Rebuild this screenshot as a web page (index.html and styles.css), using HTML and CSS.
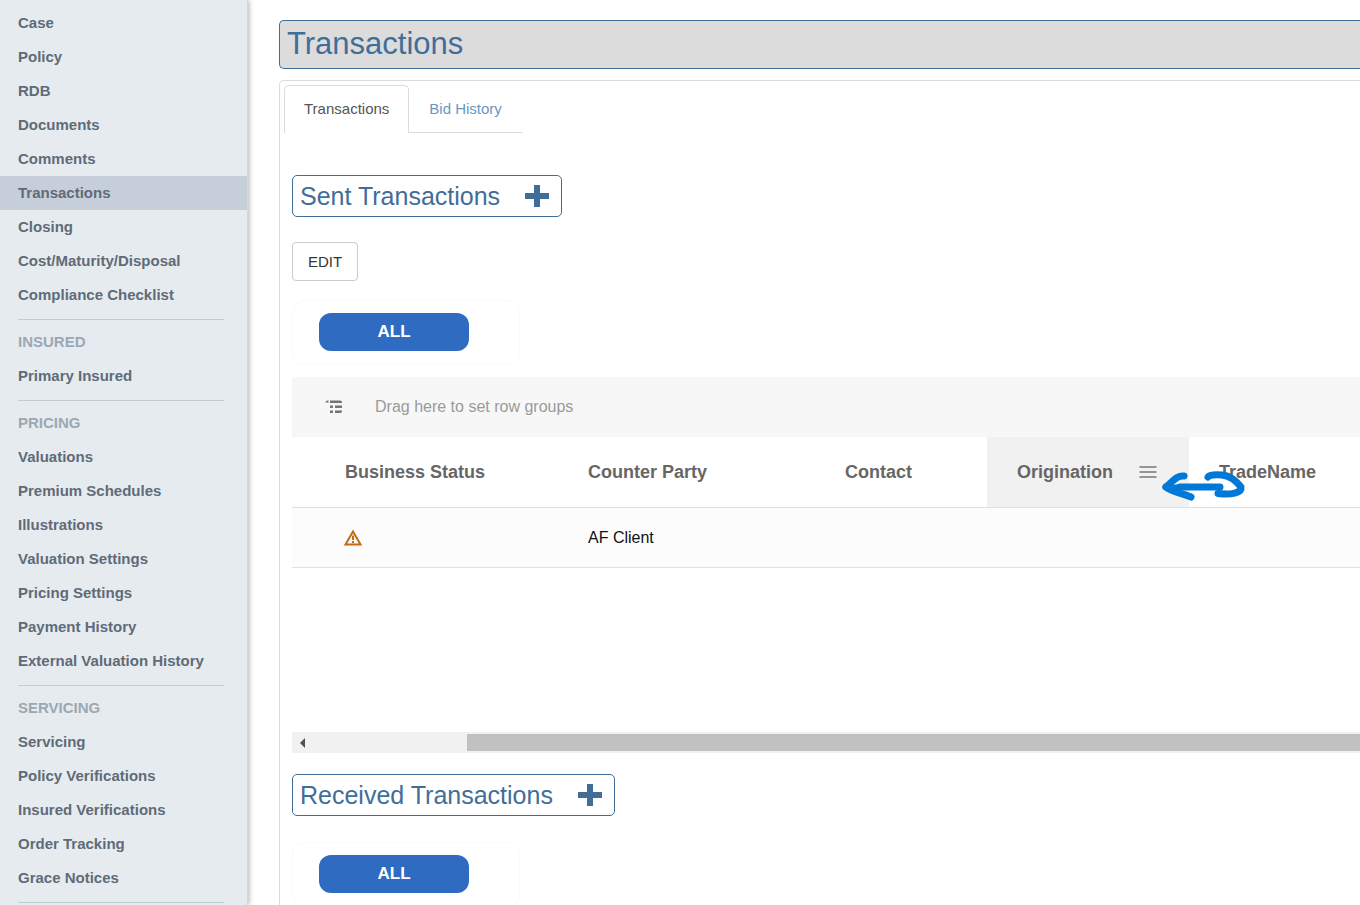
FILE: index.html
```html
<!DOCTYPE html>
<html lang="en">
<head>
    <meta charset="UTF-8">
    <meta name="viewport" content="width=device-width, initial-scale=1.0">
    <title>Transactions</title>
    <link rel="stylesheet" href="styles.css">
</head>
<body>
    <nav id="sidebar">
        <ul>
            <li><a href="#">Case</a></li>
            <li><a href="#">Policy</a></li>
            <li><a href="#">RDB</a></li>
            <li><a href="#">Documents</a></li>
            <li><a href="#">Comments</a></li>
            <li><a href="#" class="active">Transactions</a></li>
            <li><a href="#">Closing</a></li>
            <li><a href="#">Cost/Maturity/Disposal</a></li>
            <li><a href="#">Compliance Checklist</a></li>
        </ul>
        <hr>
        <h2>INSURED</h2>
        <ul>
            <li><a href="#">Primary Insured</a></li>
        </ul>
        <hr>
        <h2>PRICING</h2>
        <ul>
            <li><a href="#">Valuations</a></li>
            <li><a href="#">Premium Schedules</a></li>
            <li><a href="#">Illustrations</a></li>
            <li><a href="#">Valuation Settings</a></li>
            <li><a href="#">Pricing Settings</a></li>
            <li><a href="#">Payment History</a></li>
            <li><a href="#">External Valuation History</a></li>
        </ul>
        <hr>
        <h2>SERVICING</h2>
        <ul>
            <li><a href="#">Servicing</a></li>
            <li><a href="#">Policy Verifications</a></li>
            <li><a href="#">Insured Verifications</a></li>
            <li><a href="#">Order Tracking</a></li>
            <li><a href="#">Grace Notices</a></li>
        </ul>
        <hr>
    </nav>

    <main>
        <h1>Transactions</h1>
        <div id="panel">
            <div class="tabs">
                <a href="#" class="tab selected">Transactions</a>
                <a href="#" class="tab">Bid History</a>
            </div>

            <section class="sent">
                <div class="section-title">
                    <h2>Sent Transactions</h2>
                    <button class="add-button" aria-label="Add sent transaction">
                        <svg width="24" height="22" viewBox="0 0 24 22"><path d="M9 0h6v8h9v6h-9v8H9v-8H0V8h9z"/></svg>
                    </button>
                </div>
                <button class="edit-button">EDIT</button>
                <div class="filter">
                    <button class="filter-button">ALL</button>
                </div>

                <div class="grid">
                    <div class="row-groups">
                        <svg width="18" height="14" viewBox="0 0 18 14">
                            <path d="M0 2.500L2 .500h1.500v2z"/>
                            <path d="M5 .500h10.500l1.500 1v1.500H5z"/>
                            <path d="M5 5.500h3v2.500H5zM10 5.500h7v2.500h-7zM5 10.500h3v2.500H5zM10 10.500h7v1.500l-1.500 1H10z"/>
                        </svg>
                        <span>Drag here to set row groups</span>
                    </div>
                    <table>
                        <colgroup>
                            <col class="col-status">
                            <col class="col-party">
                            <col class="col-contact">
                            <col class="col-origination">
                            <col>
                        </colgroup>
                        <thead>
                            <tr>
                                <th>Business Status</th>
                                <th>Counter Party</th>
                                <th>Contact</th>
                                <th class="hovered">
                                    <div class="header-cell">
                                        <span>Origination</span>
                                        <button class="menu-button" aria-label="Column menu">
                                            <svg width="18" height="12" viewBox="0 0 18 12"><path d="M.500 1h17M.500 6h17M.500 11h17"/></svg>
                                        </button>
                                    </div>
                                    <svg class="resize-arrow" width="84" height="32" viewBox="0 0 84 32">
                                        <path d="M22 6C16 5 12 10 4 17C10 22 20 23 29 27"/>
                                        <path d="M4 17L15 18.500M13 18.500L18 17H58"/>
                                        <path d="M46 7C47 5 53 4.500 60 5C69 6 74 11 79 17C80 23 69 25 56 23.500"/>
                                    </svg>
                                </th>
                                <th>TradeName</th>
                            </tr>
                        </thead>
                        <tbody>
                            <tr>
                                <td>
                                    <svg class="warning" width="20" height="18" viewBox="0 0 20 18">
                                        <path class="outline" d="M10 2.500L17.500 15.500H2.500z"/>
                                        <path class="mark" d="M9 6.500h2v4.500H9zM9 12h2v2H9z"/>
                                    </svg>
                                </td>
                                <td>AF Client</td>
                                <td></td>
                                <td></td>
                                <td></td>
                            </tr>
                        </tbody>
                    </table>
                    <div class="scrollbar">
                        <button class="scroll-left" aria-label="Scroll left">
                            <svg width="5" height="10" viewBox="0 0 5 10"><path d="M5 0v10L0 5z"/></svg>
                        </button>
                        <div class="thumb"></div>
                    </div>
                </div>
            </section>

            <section class="received">
                <div class="section-title">
                    <h2>Received Transactions</h2>
                    <button class="add-button" aria-label="Add received transaction">
                        <svg width="24" height="22" viewBox="0 0 24 22"><path d="M9 0h6v8h9v6h-9v8H9v-8H0V8h9z"/></svg>
                    </button>
                </div>
                <div class="filter">
                    <button class="filter-button">ALL</button>
                </div>
            </section>
        </div>
    </main>
</body>
</html>
```

FILE: styles.css
```css
* {
    box-sizing: border-box;
}
body {
    font-family: "Liberation Sans", Arial, sans-serif;
    margin: 0;
    height: 100vh;
    display: flex;
    overflow: hidden;
    background: #fff;
    color: #333;
}
h1, h2 {
    margin: 0;
    font-weight: normal;
}
a {
    text-decoration: none;
}
button {
    font-family: inherit;
    cursor: pointer;
}
svg {
    display: block;
}

/* sidebar */
#sidebar {
    width: 248px;
    flex-shrink: 0;
    padding-top: 6px;
    background-color: #e6ebef;
    border-right: 1px solid #cfd7df;
    box-shadow: 1px 0 5px rgba(0, 0, 0, 0.3);
}
#sidebar ul {
    list-style: none;
    margin: 0;
    padding: 0;
}
#sidebar a,
#sidebar h2 {
    display: block;
    height: 34px;
    padding-left: 18px;
    font-size: 15px;
    line-height: 34px;
    font-weight: bold;
    color: #5f6b78;
}
#sidebar a.active {
    background-color: #c6cfd9;
}
#sidebar h2 {
    color: #9aa8b3;
}
#sidebar hr {
    height: 1px;
    margin: 7px 23px 5px 18px;
    border: none;
    background-color: #c3ccd5;
}

/* main area */
main {
    flex: 1;
    min-width: 0;
    padding: 20px 0 0 31px;
    display: flex;
    flex-direction: column;
}
h1 {
    flex-shrink: 0;
    height: 49px;
    padding-left: 7px;
    font-size: 31px;
    line-height: 46px;
    color: #416e98;
    background-color: #dcdcdc;
    border: 1px solid #416e98;
    border-right: none;
    border-radius: 5px 0 0 5px;
}
#panel {
    flex: 1;
    margin-top: 11px;
    padding: 4px 0 0 4px;
    border: 1px solid #dcdcdc;
    border-width: 1px 0 0 1px;
    border-radius: 5px 0 0 0;
}
.tabs {
    display: flex;
    height: 48px;
}
.tab {
    padding: 0 20px;
    font-size: 15px;
    line-height: 48px;
    color: #6897c5;
    border-bottom: 1px solid #dcdcdc;
}
.tab.selected {
    padding: 0 19px;
    line-height: 46px;
    color: #555;
    border: 1px solid #dcdcdc;
    border-bottom: none;
    border-radius: 5px 5px 0 0;
}

/* sections */
section {
    display: flex;
    flex-direction: column;
    align-items: flex-start;
    padding-left: 8px;
}
.sent {
    padding-top: 42px;
}
.received {
    padding-top: 21px;
}
.section-title {
    display: flex;
    align-items: center;
    gap: 25px;
    height: 42px;
    padding: 0 12px 0 7px;
    border: 1px solid #416e98;
    border-radius: 5px;
    color: #416e98;
}
.section-title h2 {
    font-size: 25px;
    line-height: 40px;
}
.add-button {
    padding: 0;
    border: none;
    background: none;
}
.add-button svg {
    fill: #416e98;
}
.edit-button {
    height: 39px;
    margin-top: 25px;
    padding: 0 15px;
    font-size: 15px;
    color: #333;
    background: #fff;
    border: 1px solid #ccc;
    border-radius: 4px;
}
.filter {
    width: 228px;
    height: 65px;
    padding: 12px 26px;
    border: 1px solid #fafafa;
    border-radius: 12px;
}
.sent .filter {
    margin-top: 19px;
}
.received .filter {
    margin-top: 26px;
}
.filter-button {
    display: block;
    width: 150px;
    height: 38px;
    padding: 0;
    font-size: 17px;
    font-weight: bold;
    color: #fff;
    background-color: #2f6bc1;
    border: none;
    border-radius: 12px;
}

/* data grid */
.grid {
    display: flex;
    flex-direction: column;
    width: 100%;
    height: 376px;
    margin-top: 12px;
}
.row-groups {
    display: flex;
    align-items: center;
    gap: 32px;
    height: 60px;
    padding-left: 33px;
    font-size: 16px;
    color: #9a9a9a;
    background-color: #f7f7f7;
}
.row-groups svg {
    fill: #757575;
}
table {
    width: 100%;
    table-layout: fixed;
    border-collapse: separate;
    border-spacing: 0;
}
.col-status {
    width: 266px;
}
.col-party {
    width: 257px;
}
.col-contact {
    width: 172px;
}
.col-origination {
    width: 202px;
}
th, td {
    padding: 0 30px;
    text-align: left;
    border-bottom: 1px solid #e0e0e0;
}
th:first-child {
    padding-left: 53px;
}
td:first-child {
    padding-left: 51px;
}
th {
    position: relative;
    height: 71px;
    font-size: 18px;
    color: #666;
}
td {
    height: 60px;
    font-size: 16px;
    color: #111;
    background-color: #fcfcfc;
}
th.hovered {
    padding-right: 32px;
    background-color: #f1f1f1;
}
.header-cell {
    display: flex;
    align-items: center;
    justify-content: space-between;
}
.menu-button {
    padding: 0;
    border: none;
    background: none;
}
.menu-button svg {
    fill: none;
    stroke: #757575;
    stroke-width: 1.5;
}
.resize-arrow {
    position: absolute;
    z-index: 1;
    left: 175px;
    top: 33px;
    fill: none;
    stroke: #0078d7;
    stroke-width: 7;
    stroke-linecap: round;
    stroke-linejoin: round;
}
.warning .outline {
    fill: none;
    stroke: #c46a10;
    stroke-width: 2;
}
.warning .mark {
    fill: #c46a10;
}
.scrollbar {
    display: flex;
    height: 21px;
    margin-top: auto;
    padding: 2px 0;
    background-color: #f1f1f1;
}
.scroll-left {
    width: 175px;
    padding: 0 0 0 8px;
    border: none;
    background: none;
}
.scroll-left svg {
    fill: #505050;
}
.thumb {
    flex: 1;
    background-color: #c1c1c1;
}
```
